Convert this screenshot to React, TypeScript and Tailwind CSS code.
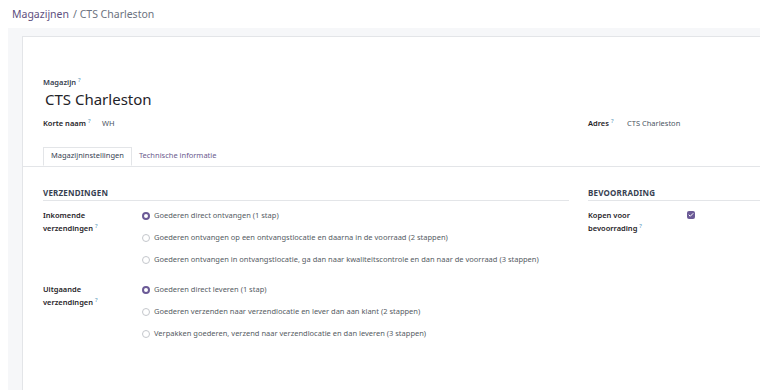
import { Check } from "lucide-react";

type Option = { label: string; checked?: boolean };

const incoming: Option[] = [
  { label: "Goederen direct ontvangen (1 stap)", checked: true },
  { label: "Goederen ontvangen op een ontvangstlocatie en daarna in de voorraad (2 stappen)" },
  {
    label:
      "Goederen ontvangen in ontvangstlocatie, ga dan naar kwaliteitscontrole en dan naar de voorraad (3 stappen)",
  },
];

const outgoing: Option[] = [
  { label: "Goederen direct leveren (1 stap)", checked: true },
  { label: "Goederen verzenden naar verzendlocatie en lever dan aan klant (2 stappen)" },
  { label: "Verpakken goederen, verzend naar verzendlocatie en dan leveren (3 stappen)" },
];

function Help() {
  return <sup className="ml-[2px] text-[6px] font-normal text-[#4d8fb8]">?</sup>;
}

function Radio({ checked }: { checked?: boolean }) {
  if (checked) {
    return <span className="h-[8px] w-[8px] shrink-0 rounded-full border-[2.5px] border-[#6b5a96] bg-white" />;
  }
  return <span className="h-[8px] w-[8px] shrink-0 rounded-full border border-[#c4c7cc] bg-white" />;
}

function RadioGroup({ options }: { options: Option[] }) {
  return (
    <div className="flex flex-col gap-[12px]">
      {options.map((o) => (
        <div key={o.label} className="flex h-[10px] items-center gap-[4px]">
          <Radio checked={o.checked} />
          <span className="whitespace-nowrap text-[#555b63]">{o.label}</span>
        </div>
      ))}
    </div>
  );
}

export default function App() {
  return (
    <div
      className="h-[390px] w-[767px] overflow-hidden bg-white text-[7.5px] text-[#374151]"
      style={{ fontFamily: '"Noto Sans", "Open Sans", sans-serif' }}
    >
      <div className="flex h-[28px] items-center pl-[12px] pt-[2px] text-[10.5px]">
        <span className="text-[#5e4f80]">Magazijnen</span>
        <span className="ml-[4px] text-[#6b7280]">/ CTS Charleston</span>
      </div>

      <div className="ml-[8px] mr-[7px] h-[362px] bg-[#f6f7f9] pl-[14px] pt-[8px]">
        <div className="h-full border-l border-t border-[#e3e5e8] bg-white">
          <div className="px-[20px] pt-[40px]">
            <div className="font-semibold text-[#374151]">
              Magazijn
              <Help />
            </div>
            <div className="ml-[2px] mt-[1px] text-[15px] leading-[20px] text-[#1f2328]">CTS Charleston</div>

            <div className="mt-[9px] flex">
              <div className="flex w-[545px] items-center">
                <span className="w-[59px] font-semibold text-[#1f2328]">
                  Korte naam
                  <Help />
                </span>
                <span className="text-[#4b5563]">WH</span>
              </div>
              <div className="flex items-center">
                <span className="w-[39px] font-semibold text-[#1f2328]">
                  Adres
                  <Help />
                </span>
                <span className="text-[#4b5563]">CTS Charleston</span>
              </div>
            </div>
          </div>

          <div className="mt-[17px] flex border-b border-[#e3e5e8] pl-[20px]">
            <div className="-mb-px flex h-[19px] items-center border border-b-white border-[#e3e5e8] bg-white px-[7px] text-[#374151]">
              Magazijninstellingen
            </div>
            <div className="flex h-[19px] items-center px-[7px] text-[#6b5a8e]">Technische informatie</div>
          </div>

          <div className="flex pl-[20px] pt-[20px]">
            <div className="w-[526px]">
              <div className="border-b border-[#e3e5e8] pb-[1px] text-[8px] font-bold tracking-[0.2px] text-[#374151]">
                VERZENDINGEN
              </div>

              <div className="mt-[10px] flex">
                <div className="-mt-[2px] w-[99px] font-semibold leading-[13px] text-[#1f2328]">
                  Inkomende
                  <br />
                  verzendingen
                  <Help />
                </div>
                <RadioGroup options={incoming} />
              </div>

              <div className="mt-[20px] flex">
                <div className="-mt-[2px] w-[99px] font-semibold leading-[13px] text-[#1f2328]">
                  Uitgaande
                  <br />
                  verzendingen
                  <Help />
                </div>
                <RadioGroup options={outgoing} />
              </div>
            </div>

            <div className="ml-[19px] flex-1">
              <div className="border-b border-[#e3e5e8] pb-[1px] text-[8px] font-bold tracking-[0.2px] text-[#374151]">
                BEVOORRADING
              </div>
              <div className="mt-[8px] flex">
                <div className="w-[99px] font-semibold leading-[13px] text-[#1f2328]">
                  Kopen voor
                  <br />
                  bevoorrading
                  <Help />
                </div>
                <span className="mt-[2px] flex h-[8px] w-[8px] items-center justify-center rounded-[2px] bg-[#6b5a96]">
                  <Check size={6} strokeWidth={4} className="text-white" />
                </span>
              </div>
            </div>
          </div>
        </div>
      </div>
    </div>
  );
}
